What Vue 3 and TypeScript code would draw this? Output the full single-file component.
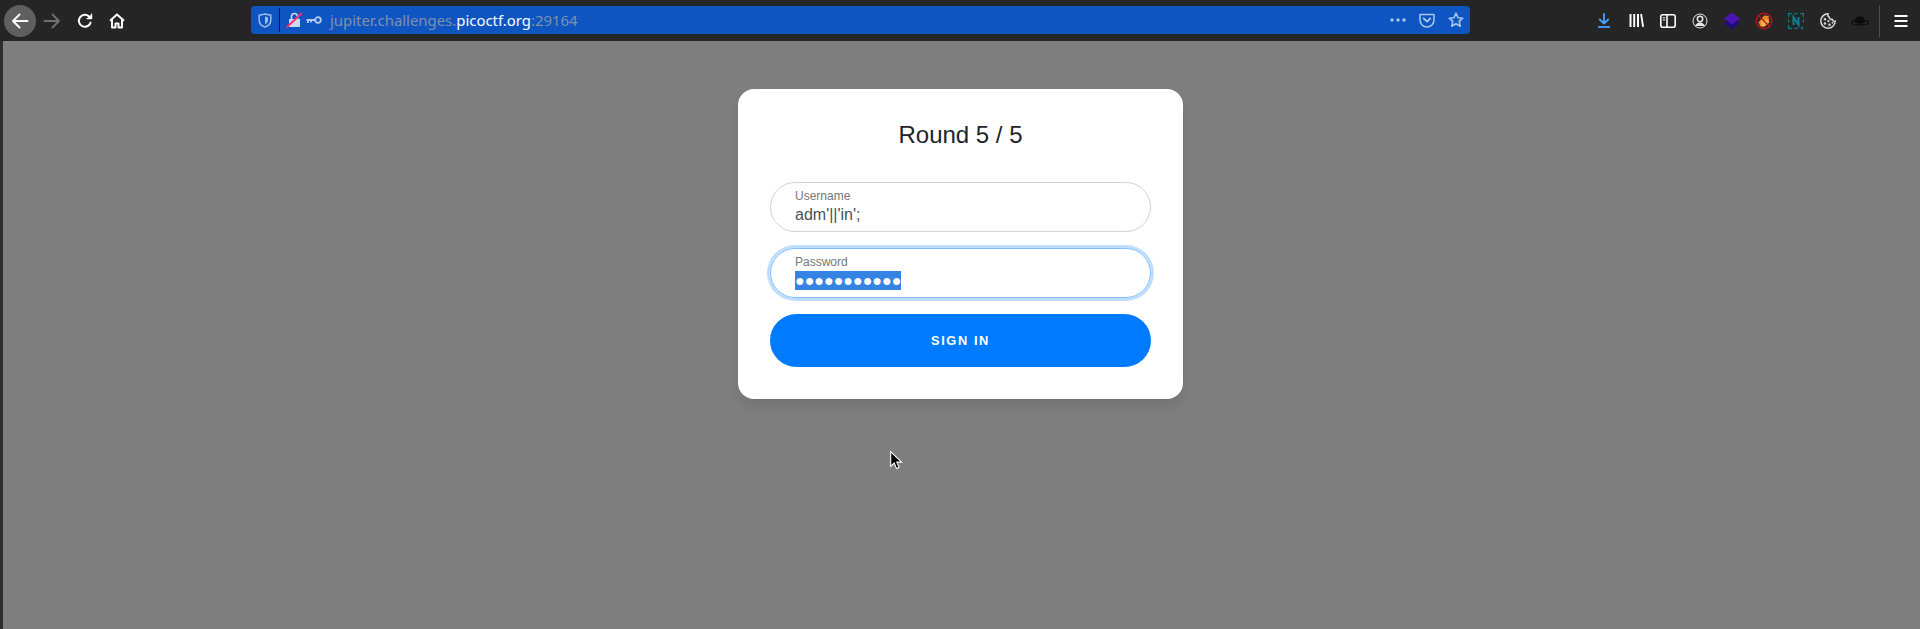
<template>
  <div class="browser">
    <header class="toolbar">
      <nav class="nav_buttons">
        <button class="tool tool_back">
          <svg width="18" height="18" viewBox="0 0 18 18" fill="none" stroke="#fbfbfe" stroke-width="2" stroke-linecap="round" stroke-linejoin="round"><path d="M16.5 9H2M8.5 2.5 2 9l6.500 6.500" /></svg>
        </button>
        <button class="tool">
          <svg width="18" height="18" viewBox="0 0 18 18" fill="none" stroke="#6f6f6f" stroke-width="2" stroke-linecap="round" stroke-linejoin="round"><path d="M1.500 9H16M9.500 2.500 16 9l-6.500 6.500" /></svg>
        </button>
        <button class="tool tool_shift">
          <svg width="16" height="16" viewBox="0 0 16 16" fill="none" stroke="#fbfbfe" stroke-width="2" stroke-linecap="round" stroke-linejoin="round"><path d="M13.600 9.600A6 6 0 1 1 12 3.400L14 5" /><path d="M14.600 1v4.600H10" fill="#fbfbfe" stroke-width="1.200" /></svg>
        </button>
        <button class="tool tool_shift">
          <svg width="16" height="16" viewBox="0 0 16 16" fill="none" stroke="#fbfbfe" stroke-width="2" stroke-linejoin="round"><path d="M1 7.800 8 1.400l7 6.400M3 6.600V14.400H6.500V10.500H9.500V14.400H13V6.600" /></svg>
        </button>
      </nav>

      <div class="urlbar">
        <svg class="shield" width="14" height="15" viewBox="0 0 14 15" fill="none"><path d="M1.200 2.200 7 1l5.800 1.200v5C12.800 10.800 10 13 7 14 4 13 1.200 10.800 1.200 7.200z" stroke="#9dbce9" stroke-width="1.500" /><path d="M7 3.500 10 4.200v3C10 9 8.500 10.500 7 11.200z" fill="#9dbce9" /></svg>
        <span class="url_divider"></span>
        <svg class="lock" width="18" height="18" viewBox="0 0 18 18"><path d="M4 8h11v8H4z" fill="#c9d9f2" /><path d="M6.500 8V5.500a3 3 0 0 1 6 0V8" fill="none" stroke="#c9d9f2" stroke-width="1.600" /><path d="M1.500 16.500 17 2" stroke="#ff2d6b" stroke-width="1.800" /></svg>
        <svg class="key" width="16" height="10" viewBox="0 0 16 10" fill="none"><circle cx="12" cy="5" r="2.800" stroke="#b4cbee" stroke-width="1.800" /><path d="M9 5H.5M2 5v3M5 5v2.500" stroke="#b4cbee" stroke-width="1.800" /></svg>
        <span class="url_text">jupiter.challenges.<b>picoctf.org</b>:29164</span>
        <div class="url_actions">
          <svg width="16" height="4" viewBox="0 0 16 4" fill="#a9c6ef"><circle cx="2" cy="2" r="1.700" /><circle cx="8" cy="2" r="1.700" /><circle cx="14" cy="2" r="1.700" /></svg>
          <svg width="16" height="15" viewBox="0 0 16 15" fill="none" stroke="#a9c6ef" stroke-width="1.500"><path d="M1 1.500h14v5.500a7 7 0 0 1-14 0z" stroke-linejoin="round" /><path d="M4.800 5.500 8 8.600l3.200-3.100" stroke-width="1.800" stroke-linecap="round" stroke-linejoin="round" /></svg>
          <svg width="16" height="16" viewBox="0 0 16 16" fill="none" stroke="#a9c6ef" stroke-width="1.600" stroke-linejoin="round"><path d="m8 1.200 2 4.500 4.800.5-3.600 3.200 1 4.800L8 11.800l-4.200 2.400 1-4.800L1.200 6.200 6 5.700z" /></svg>
        </div>
      </div>

      <div class="toolbar_icons">
        <button class="tool">
          <svg width="14" height="15" viewBox="0 0 14 15" fill="none" stroke="#45a1ff" stroke-width="1.800" stroke-linecap="round"><path d="M7 1v9.500M2.800 6.500 7 10.700l4.200-4.200" stroke-linejoin="round" /><path d="M1 14h12" stroke-linecap="butt" /></svg>
        </button>
        <button class="tool">
          <svg width="15" height="15" viewBox="0 0 15 15" fill="#fbfbfe"><path d="M.5 1h2v13h-2zM4.200 1h2v13h-2zM8 1h2v13H8zM11.200 1.200l1.800-.5 2 13-1.800.3z" /></svg>
        </button>
        <button class="tool">
          <svg width="16" height="14" viewBox="0 0 16 14" fill="none" stroke="#fbfbfe" stroke-width="1.600"><rect x=".8" y=".8" width="14.400" height="12.400" rx="2" /><path d="M7 1v12" /><path d="M2.800 3.800h2.400M2.800 6h2.400" stroke-width="1" /></svg>
        </button>
        <button class="tool">
          <svg width="16" height="16" viewBox="0 0 16 16" fill="none" stroke="#e8e8e8" stroke-width="1"><circle cx="8" cy="8" r="7" /><circle cx="8" cy="6" r="2.700" fill="none" stroke-width="1.500" /><path d="M3.400 13c.4-2.300 2.300-3.500 4.600-3.500s4.200 1.200 4.600 3.500z" fill="#e8e8e8" stroke="none" /></svg>
        </button>
        <button class="tool">
          <svg width="18" height="18" viewBox="0 0 18 18"><path d="M9 6.500 17 11.500 9 17.500 1 11.500z" fill="#1f0c78" /><path d="M9 .5 17 6.500 9 12.500 1 6.500z" fill="#4b14b4" /></svg>
        </button>
        <button class="tool">
          <svg width="18" height="18" viewBox="0 0 18 18"><path d="M3.500 10.500 9 3.500l4.500.5 1 6.500L9 15l-3.500-.500z" fill="#e8892b" /><path d="M6 8h6l2 2-4 4H6z" fill="#f6b04a" /><circle cx="9" cy="9" r="7.800" fill="none" stroke="#b5141c" stroke-width="1.400" /><path d="M3.500 3.500 14.500 14.500" stroke="#b5141c" stroke-width="1.400" /></svg>
        </button>
        <button class="tool">
          <svg width="16" height="16" viewBox="0 0 16 16" fill="none" stroke="#0b7f90" stroke-width="1.200"><path d="M.6 4V.6H4M12 .6h3.400V4M.6 12v3.400H4M6.500.6h3M.6 6.500v3M15.400 6.500v3M6.500 15.400h3M12.500 15.400h1.500M14.500 13.500v2.500" /><path d="M5.500 12V4.200l5 7.600V4" stroke-width="2" /></svg>
        </button>
        <button class="tool">
          <svg width="16" height="16" viewBox="0 0 16 16"><path d="M8 .8a7.200 7.200 0 1 0 7.200 7.400c-1.500.4-2.800-.4-3-1.800-1.500.2-2.900-.8-3-2.300C8 3.800 7.500 2.200 8 .8z" fill="#2b2b2b" stroke="#d8d8d8" stroke-width="1.500" /><circle cx="5" cy="6.200" r="1.200" fill="#d8d8d8" /><circle cx="5" cy="10.500" r="1.200" fill="#d8d8d8" /><circle cx="8.500" cy="8.200" r="1.100" fill="#d8d8d8" /><circle cx="9.500" cy="11.800" r="1.200" fill="#d8d8d8" /><circle cx="12.500" cy="9.800" r=".9" fill="#d8d8d8" /></svg>
        </button>
        <button class="tool">
          <svg width="18" height="10" viewBox="0 0 18 10" fill="#0b0b0b"><path d="M5 1.200C6.500.2 11 .2 12.500 1.200l.8 4.300H4.400z" /><ellipse cx="9" cy="6.500" rx="8.600" ry="2.400" fill="none" stroke="#0b0b0b" stroke-width="1.100" /><path d="M4 5h9.500v1.800C10 8 7 8 4 6.800z" /></svg>
        </button>
      </div>
      <span class="toolbar_divider"></span>
      <button class="tool">
        <svg width="14" height="12" viewBox="0 0 14 12" fill="#fbfbfe"><path d="M.5 0h13v2H.5zM.5 5h13v2H.5zM.5 10h13v2H.5z" /></svg>
      </button>
    </header>

    <main class="page">
      <section class="card">
        <h5 class="card_title">Round 5 / 5</h5>
        <form class="signin" @submit.prevent>
          <div class="field">
            <label>Username</label>
            <div class="field_value">adm'||'in';</div>
          </div>
          <div class="field field_focus">
            <label>Password</label>
            <div class="field_value"><span class="selected">●●●●●●●●●●●</span></div>
          </div>
          <button class="signin_btn" type="submit">Sign in</button>
        </form>
      </section>
      <svg class="cursor" width="13" height="19" viewBox="0 0 13 19"><path d="M.7.7v14.600l3.500-3.300 2.300 5.600 2.600-1.100-2.300-5.400h4.700z" fill="#000" stroke="#fff" stroke-width="1.100" /></svg>
    </main>
  </div>
</template>

<script setup lang="ts">
</script>

<style>
html, body {
  margin: 0;
  background: #7f7f7f;
  overflow: hidden;
}
</style>

<style scoped>
.browser {
  display: flex;
  flex-direction: column;
  height: 629px;
  width: 1920px;
  font-family: "Liberation Sans", Arial, sans-serif;
}

.toolbar {
  display: flex;
  align-items: center;
  height: 41px;
  flex: none;
  padding-left: 4px;
  box-sizing: border-box;
  background: #252525;
}

.nav_buttons,
.toolbar_icons {
  display: flex;
}

.tool {
  display: flex;
  align-items: center;
  justify-content: center;
  width: 32px;
  height: 32px;
  padding: 0;
  border: 0;
  background: transparent;
}

.tool_shift svg {
  margin-left: 2px;
}

.tool_back {
  border-radius: 50%;
  background: #5f5f5f;
}

.urlbar {
  display: flex;
  align-items: center;
  width: 1219px;
  height: 28px;
  margin-left: 119px;
  margin-top: -1px;
  border-radius: 4px;
  background: #0f55c2;
  box-sizing: border-box;
  padding-left: 7px;
}

.url_divider {
  width: 1px;
  height: 24px;
  margin-left: 7px;
  background: #10131f;
}

.lock {
  margin-left: 5px;
}

.key {
  margin-left: 3px;
}

.url_text {
  margin-left: 8px;
  font-family: "Noto Sans", sans-serif;
  font-size: 14.9px;
  color: #7f90ac;
}

.url_text b {
  font-weight: 400;
  color: #fbfbfe;
}

.url_actions {
  display: flex;
  align-items: center;
  gap: 13px;
  margin-left: auto;
  margin-right: 6px;
}

.toolbar_icons {
  margin-left: 118px;
}

.toolbar_divider {
  width: 1px;
  height: 32px;
  margin: 0 5px 0 3px;
  background: #4e4e4e;
}

.page {
  position: relative;
  flex: 1;
  display: flex;
  justify-content: center;
  align-items: flex-start;
  padding-left: 3px;
  padding-top: 48px;
  box-sizing: border-box;
  background: #7f7f7f;
  box-shadow: inset 3px 0 0 #2f2f33;
}

.card {
  width: 445px;
  height: 310px;
  margin-right: 2px;
  box-sizing: border-box;
  padding: 32px;
  border-radius: 16px;
  background: #fff;
  box-shadow: 0 8px 16px rgba(0, 0, 0, 0.1);
  color: #212529;
}

.card_title {
  margin: 0 0 33px;
  font-size: 24px;
  font-weight: 400;
  line-height: 28px;
  text-align: center;
}

.signin {
  display: flex;
  flex-direction: column;
  gap: 16px;
}

.field {
  display: flex;
  flex-direction: column;
  height: 50px;
  box-sizing: border-box;
  padding: 6px 24px 0;
  border: 1px solid #ced4da;
  border-radius: 32px;
  color: #495057;
}

.field_focus {
  border-color: #80bdff;
  box-shadow: 0 0 0 3px rgba(0, 123, 255, 0.25);
}

.field label {
  font-size: 12px;
  line-height: 14px;
  color: #777;
}

.field_value {
  margin-top: 2px;
  font-size: 16px;
  line-height: 19px;
}

.selected {
  display: inline-block;
  background: #3584e4;
  color: #fff;
}

.signin_btn {
  height: 53px;
  padding: 0;
  border: 0;
  border-radius: 80px;
  background: #007bff;
  color: #fff;
  font-family: inherit;
  font-size: 12.8px;
  font-weight: 700;
  letter-spacing: 1.6px;
  text-transform: uppercase;
}

.cursor {
  position: absolute;
  left: 890px;
  top: 410px;
}
</style>
